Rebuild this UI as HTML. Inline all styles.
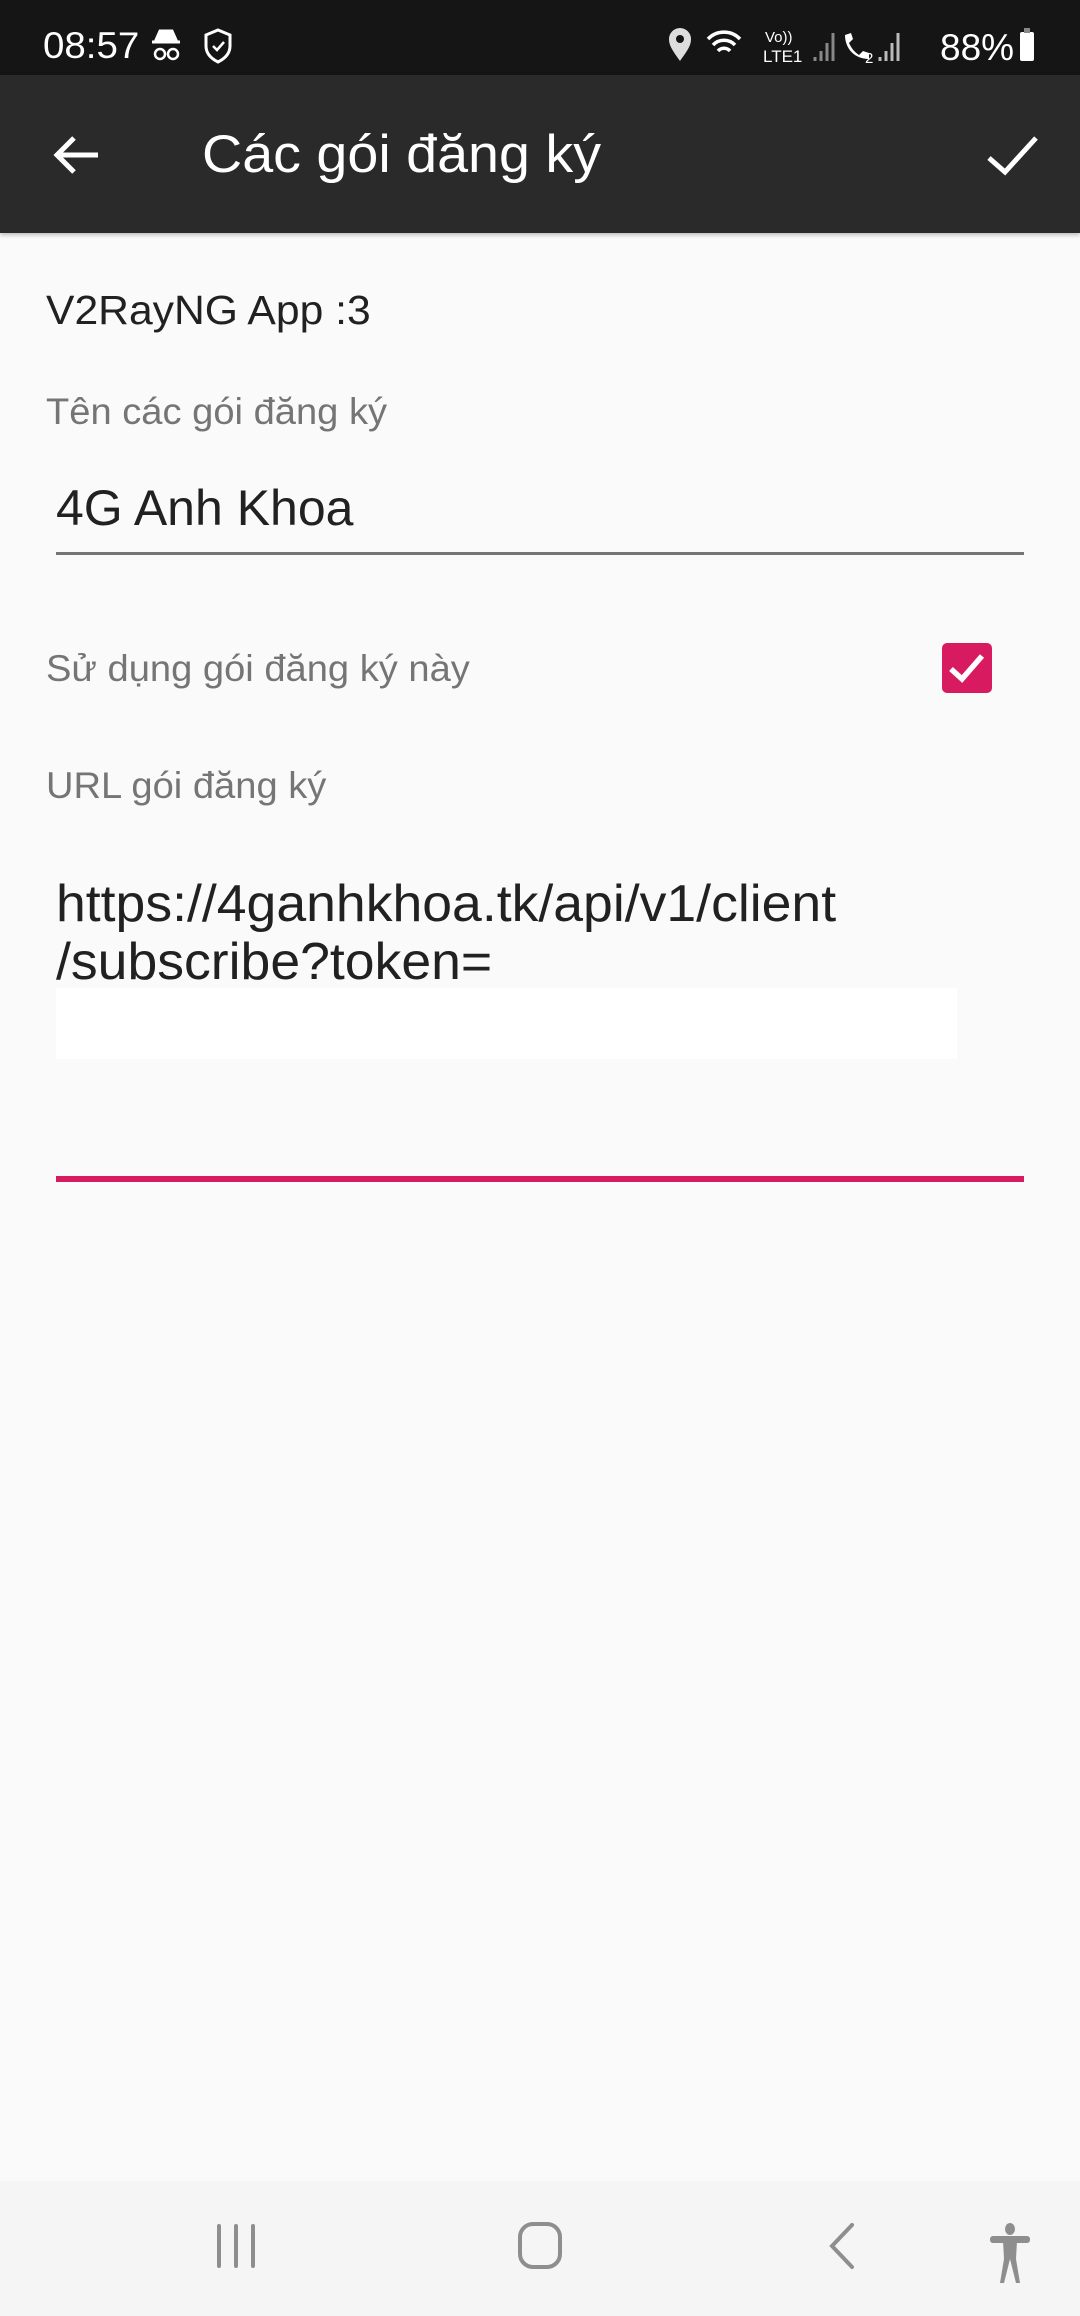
<!DOCTYPE html>
<html><head><meta charset="utf-8">
<style>
*{margin:0;padding:0;box-sizing:border-box}
body{width:1080px;height:2316px;background:#fafafa;font-family:"Liberation Sans",sans-serif;position:relative;overflow:hidden}
.abs{position:absolute;white-space:nowrap}
.sq{display:inline-block;transform-origin:left center}
</style></head><body>
<div class="abs" style="left:0;top:0;width:1080px;height:75px;background:#151515"></div>
<div class="abs" style="left:0;top:75px;width:1080px;height:158px;background:#2a2a2a;box-shadow:0 2px 4px rgba(0,0,0,.25)"></div>
<div class="abs" style="left:43px;top:24px;font-size:37px;color:#fff;line-height:44px"><span class="sq" style="transform:scaleX(1.04)">08:57</span></div>
<svg class="abs" style="left:150px;top:28px" width="85" height="36" viewBox="0 0 85 36">
<path d="M6 12 L10 3 H22 L26 12 Z M2 14 H30" stroke="#fff" stroke-width="3" fill="#fff"/>
<circle cx="10" cy="26" r="5" stroke="#fff" stroke-width="2.5" fill="none"/><circle cx="23" cy="26" r="5" stroke="#fff" stroke-width="2.5" fill="none"/>
<path d="M68 2 L80 7 V18 C80 26 74 31 68 34 C62 31 56 26 56 18 V7 Z" stroke="#fff" stroke-width="3" fill="none"/>
<path d="M63 18 L67 22 L74 14" stroke="#fff" stroke-width="2.5" fill="none"/>
</svg>
<svg class="abs" style="left:665px;top:25px" width="380" height="42" viewBox="0 0 380 42">
<path d="M15 36 C8 26 4 21 4 14 A11 11 0 0 1 26 14 C26 21 22 26 15 36 Z" fill="#ddd"/><circle cx="15" cy="14" r="4" fill="#151515"/>
<path d="M43 14 A22 22 0 0 1 75 14 M48 20 A15 15 0 0 1 70 20 M53 26 A8 8 0 0 1 65 26" stroke="#fff" stroke-width="3.5" fill="none"/>
<text x="100" y="17" font-size="15" fill="#fff" font-family="Liberation Sans">Vo))</text>
<text x="98" y="37" font-size="17" fill="#fff" font-family="Liberation Sans">LTE1</text>
<path d="M150 36 V32 M156 36 V26 M162 36 V18 M168 36 V8" stroke="#888" stroke-width="3"/>
<path d="M180 10 C180 24 190 34 204 34 L204 28 L198 26 L194 30 C188 26 186 22 184 18 L188 14 L186 8 Z" fill="#fff"/>
<text x="200" y="38" font-size="15" fill="#fff">2</text>
<path d="M215 36 V32 M221 36 V26 M227 36 V18 M233 36 V8" stroke="#bbb" stroke-width="3"/>
<text x="275" y="35" font-size="37" fill="#fff">88%</text>
<rect x="355" y="7" width="14" height="29" rx="2" fill="#fff"/><rect x="359" y="3" width="6" height="5" fill="#888"/>
</svg>
<svg class="abs" style="left:50px;top:130px" width="56" height="50" viewBox="0 0 56 50"><path d="M48 25 H8 M24 8 L7 25 L24 42" stroke="#fff" stroke-width="5" fill="none"/></svg>
<div class="abs" style="left:202px;top:124px;font-size:53px;color:#fff;line-height:62px"><span class="sq" style="transform:scaleX(1.05)">Các gói đăng ký</span></div>
<svg class="abs" style="left:985px;top:132px" width="56" height="48" viewBox="0 0 56 48"><path d="M4 26 L20 40 L51 6" stroke="#fff" stroke-width="5" fill="none"/></svg>

<div class="abs" style="left:46px;top:286px;font-size:41px;color:#212121;line-height:48px"><span class="sq" style="transform:scaleX(1.04)">V2RayNG App :3</span></div>
<div class="abs" style="left:46px;top:390px;font-size:37px;color:#757575;line-height:44px"><span class="sq" style="transform:scaleX(1.03)">Tên các gói đăng ký</span></div>
<div class="abs" style="left:56px;top:478px;font-size:50px;color:#212121;line-height:60px">4G Anh Khoa</div>
<div class="abs" style="left:56px;top:552px;width:968px;height:3px;background:#757575"></div>
<div class="abs" style="left:46px;top:647px;font-size:37px;color:#757575;line-height:44px"><span class="sq" style="transform:scaleX(1.03)">Sử dụng gói đăng ký này</span></div>
<div class="abs" style="left:942px;top:643px;width:50px;height:50px;background:#d81b60;border-radius:5px"></div>
<svg class="abs" style="left:942px;top:643px" width="50" height="50" viewBox="0 0 50 50"><path d="M9 26 L20 36 L40 13" stroke="#fff" stroke-width="5.5" fill="none"/></svg>
<div class="abs" style="left:46px;top:764px;font-size:37px;color:#757575;line-height:44px"><span class="sq" style="transform:scaleX(1.03)">URL gói đăng ký</span></div>
<div class="abs" style="left:56px;top:875px;font-size:52px;color:#212121;line-height:58px"><span class="sq" style="transform:scaleX(1.03)">https://4ganhkhoa.tk/api/v1/client<br>/subscribe?token=</span></div>
<div class="abs" style="left:56px;top:988px;width:901px;height:71px;background:#fff"></div>
<div class="abs" style="left:56px;top:1176px;width:968px;height:6px;background:#d81b60"></div>

<div class="abs" style="left:0;top:2181px;width:1080px;height:135px;background:#f5f5f5"></div>
<svg class="abs" style="left:0;top:2181px" width="1080" height="135" viewBox="0 0 1080 135">
<g stroke="#8e8e8e" stroke-width="4" stroke-linecap="round" fill="none">
<path d="M219 45 V85 M236 45 V85 M253 45 V85"/>
<rect x="520" y="43" width="40" height="43" rx="13"/>
<path d="M852 44 L832 65 L852 86"/>
</g>
<g fill="#8e8e8e">
<ellipse cx="1010" cy="48" rx="5" ry="6"/>
<rect x="990" y="55" width="40" height="7" rx="3"/>
<path d="M1003 60 H1017 L1016 78 L1020 102 L1016 102 L1010 78 L1004 102 L1000 102 L1004 78 Z"/>
</g>
</svg>
</body></html>
